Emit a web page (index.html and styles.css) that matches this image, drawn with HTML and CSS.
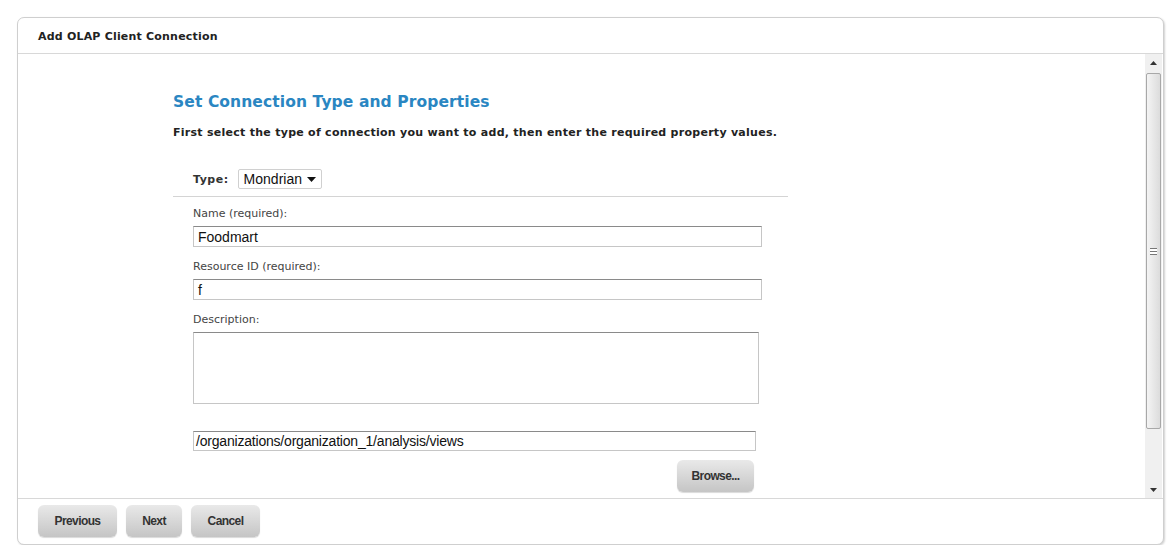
FILE: index.html
```html
<!DOCTYPE html>
<html lang="en">
<head>
    <meta charset="UTF-8">
    <title>Add OLAP Client Connection</title>
    <link rel="stylesheet" href="styles.css">
</head>
<body>
    <div class="dialog">
        <div class="dialog-header">
            <h1>Add OLAP Client Connection</h1>
        </div>

        <div class="dialog-body">
            <div class="content">
                <h2>Set Connection Type and Properties</h2>
                <p class="intro">First select the type of connection you want to add, then enter the required property values.</p>

                <div class="type-row">
                    <label for="type">Type:</label>
                    <div class="select">
                        <span>Mondrian</span>
                        <svg width="9" height="5" viewBox="0 0 9 5"><path d="M0 0h9L4.5 5z" fill="#111"/></svg>
                    </div>
                </div>

                <div class="fields">
                    <div class="field">
                        <label>Name (required):</label>
                        <div class="input">Foodmart</div>
                    </div>
                    <div class="field">
                        <label>Resource ID (required):</label>
                        <div class="input">f</div>
                    </div>
                    <div class="field">
                        <label>Description:</label>
                        <div class="textarea"></div>
                    </div>
                    <div class="input path">/organizations/organization_1/analysis/views</div>
                    <div class="browse-row">
                        <button class="btn">Browse...</button>
                    </div>
                </div>
            </div>

            <!-- fake scrollbar -->
            <div class="scrollbar">
                <div class="arrow">
                    <svg width="7" height="4" viewBox="0 0 7 4"><path d="M3.5 0L7 4H0z" fill="#333"/></svg>
                </div>
                <div class="track">
                    <div class="thumb">
                        <div class="grip"></div>
                    </div>
                </div>
                <div class="arrow">
                    <svg width="7" height="4" viewBox="0 0 7 4"><path d="M0 0h7L3.5 4z" fill="#333"/></svg>
                </div>
            </div>
        </div>

        <div class="dialog-footer">
            <button class="btn prev">Previous</button>
            <button class="btn next">Next</button>
            <button class="btn cancel">Cancel</button>
        </div>
    </div>
</body>
</html>
```

FILE: styles.css
```css
* {
    margin: 0;
    padding: 0;
    box-sizing: border-box;
}

body {
    background-color: #fff;
    padding: 17px 0 0 17px;
    font-family: "DejaVu Sans", Verdana, sans-serif;
    color: #222;
}

.dialog {
    width: 1147px;
    height: 528px;
    border: 1px solid #cfcfcf;
    border-radius: 7px;
    box-shadow: 1px 1px 2px rgba(0,0,0,0.18);
    display: flex;
    flex-direction: column;
    background-color: #fff;
}

.dialog-header {
    height: 36px;
    border-bottom: 1px solid #d8d8d8;
    padding: 12px 0 0 20px;
}

.dialog-header h1 {
    font-size: 11px;
    font-weight: bold;
    color: #222;
    letter-spacing: 0.2px;
}

.dialog-body {
    flex: 1;
    display: flex;
    min-height: 0;
}

.content {
    flex: 1;
    padding: 38px 0 0 155px;
}

.content h2 {
    font-size: 15.5px;
    font-weight: bold;
    color: #2a86c2;
    line-height: 20px;
    letter-spacing: 0.1px;
}

.intro {
    font-size: 11px;
    font-weight: bold;
    color: #222;
    margin-top: 14px;
    letter-spacing: 0.27px;
}

.type-row {
    width: 615px;
    display: flex;
    align-items: center;
    gap: 9px;
    padding: 30px 0 7px 20px;
    border-bottom: 1px solid #d4d4d4;
}

.type-row label {
    font-size: 11px;
    font-weight: bold;
    color: #333;
    letter-spacing: 0.5px;
}

.select {
    width: 84px;
    height: 20px;
    border: 1px solid #d0d0d0;
    border-radius: 2px;
    display: flex;
    align-items: center;
    justify-content: space-between;
    padding: 0 5px 0 5px;
    font-family: "Liberation Sans", Arial, sans-serif;
    font-size: 14px;
    color: #111;
}

.fields {
    padding: 10px 0 0 20px;
}

.field label {
    display: block;
    font-size: 11px;
    color: #444;
    margin-bottom: 6px;
}

.field {
    margin-bottom: 13px;
}

.input {
    width: 569px;
    height: 21px;
    border: 1px solid #c6c6c6;
    border-top-color: #8a8a8a;
    padding: 2px 4px 0;
    font-family: "Liberation Sans", Arial, sans-serif;
    font-size: 14px;
    color: #111;
}

.textarea {
    width: 566px;
    height: 72px;
    border: 1px solid #c6c6c6;
    border-top-color: #8a8a8a;
}

.input.path {
    width: 563px;
    height: 20px;
    margin-top: 27px;
    padding: 1px 2px 0;
    font-size: 14px;
    letter-spacing: -0.2px;
}

.browse-row {
    width: 561px;
    display: flex;
    justify-content: flex-end;
    padding-top: 9px;
}

.btn {
    height: 32px;
    border: none;
    border-radius: 6px;
    background: linear-gradient(#e9e9e9, #c5c5c5);
    box-shadow: 0 1px 1px rgba(0,0,0,0.15);
    font-family: "Liberation Sans", Arial, sans-serif;
    font-size: 12px;
    font-weight: bold;
    letter-spacing: -0.6px;
    color: #333;
    cursor: pointer;
}

.browse-row .btn {
    width: 77px;
}

.dialog-footer {
    height: 46px;
    border-top: 1px solid #d8d8d8;
    display: flex;
    gap: 9px;
    padding: 6px 0 0 20px;
}

.prev {
    width: 79px;
}

.next {
    width: 56px;
}

.cancel {
    width: 69px;
}

.scrollbar {
    width: 17px;
    margin-right: 1px;
    background-color: #f0f0f0;
    display: flex;
    flex-direction: column;
}

.arrow {
    height: 17px;
    display: flex;
    align-items: center;
    justify-content: center;
}

.track {
    flex: 1;
    padding-top: 2px;
    padding-bottom: 52px;
    display: flex;
}

.thumb {
    flex: 1;
    margin: 0 1px;
    border: 1px solid #a8a8a8;
    border-radius: 2px;
    background: linear-gradient(to right, #f4f4f4, #dcdcdc);
    display: flex;
    align-items: center;
    justify-content: center;
}

.grip {
    width: 7px;
    height: 7px;
    border-top: 1px solid #777;
    border-bottom: 1px solid #777;
    background: linear-gradient(#fff 0 2px, #777 2px 3px, #fff 3px);
}
```
